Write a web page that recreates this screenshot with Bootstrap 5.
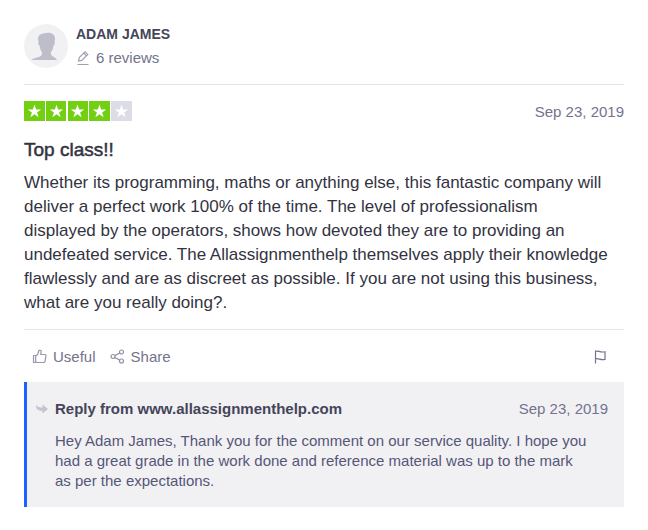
<!DOCTYPE html>
<html lang="en">
<head>
<meta charset="utf-8">
<meta name="viewport" content="width=device-width, initial-scale=1">
<title>Review by Adam James</title>
<link href="https://cdn.jsdelivr.net/npm/bootstrap@5.3.0/dist/css/bootstrap.min.css" rel="stylesheet">
<style>
  body { font-family: "Liberation Sans", Arial, sans-serif; font-size: 15px; line-height: 22px; color: #33333f; background: #fff; }
  svg { flex: none; }
  .soft, .soft:hover { color: #73738c; }
  .reviewer { line-height: 20px; }
  .reviewer-name { font-size: 14px; font-weight: 700; color: #45455a; }
  .rule-top { border-top: 1px solid #e5e5e9; }
  .review-title { font-size: 19px; line-height: 24px; font-weight: 500; -webkit-text-stroke: .5px; margin: 15px 0 9px; }
  .review-text { font-size: 17px; line-height: 24px; margin-bottom: 14px; }
  .actions { gap: 14px; padding: 15px 8px 13px; }
  .action { font-size: 15px; line-height: 24px; }
  .reply { background: #f1f1f4; border-left: 3px solid #1b61ff; padding: 15px 16px 16px 8px; }
  .reply-head { margin-bottom: 10px; }
  .reply-from { font-size: 15px; line-height: 24px; font-weight: 700; color: #45455a; }
  .reply-text { font-size: 15px; line-height: 20px; color: #565678; margin-left: 20px; }
</style>
</head>
<body>
<article class="container-fluid px-4 pt-4 pb-3">
  <header class="d-flex align-items-start gap-2 pb-3">
    <svg width="44" height="44" viewBox="0 0 44 44" role="img" aria-label="Avatar"><circle cx="22" cy="22" r="22" fill="#f1f1f4"/><path fill="#bebeca" d="M7.500 36c1.500-2 7-2.600 9-3.800 1.400-.8 1.700-2 1.500-4.200-1.400-1.600-2-3.600-2.300-6-1.400-.8-1.700-3-1.200-4.400-1.300-5 .8-7.600 5-8.100 4-1.300 8-.8 9.800.9 2 1.600 2 4.400 1.300 7.200.5 1.600 0 3.800-1.200 4.400-.3 2.600-1 4.400-2.500 6-.2 2.200.2 3.400 1.600 4.200 2 1.200 3.500 1.800 4.500 3.800z"/></svg>
    <div class="reviewer">
      <div class="reviewer-name">ADAM JAMES</div>
      <div class="d-flex align-items-center soft pt-1">
        <svg class="me-1" width="16" height="16" viewBox="0 0 16 16" fill="none" stroke="#a0a0b4" stroke-width="1.200"><path d="M1.500 14.500h11M2.500 11l.8-3.400L9 1.800l2.800 2.600-6 6zM7.800 3.200l2.600 2.500"/></svg>6 reviews
      </div>
    </div>
  </header>

  <section class="rule-top pt-3">
    <div class="d-flex justify-content-between align-items-start">
      <svg width="108" height="20" viewBox="0 0 108 20" role="img" aria-label="4 out of 5 stars">
        <defs><path id="star" fill="#fff" d="M10.500 3.500l1.600 4.900h5.100l-4.100 3 1.600 4.900-4.200-3-4.200 3 1.600-4.900-4.100-3h5.100z"/></defs>
        <path fill="#73cf11" d="M0 0h21v20H0zM22 0h20v20H22zM44 0h20v20H44zM65 0h21v20H65z"/><path fill="#dcdce6" d="M87 0h21v20H87z"/>
        <use href="#star"/><use href="#star" x="22"/><use href="#star" x="43"/><use href="#star" x="65"/><use href="#star" x="87"/>
      </svg>
      <time class="soft" datetime="2019-09-23">Sep 23, 2019</time>
    </div>
    <h1 class="review-title">Top class!!</h1>
    <p class="review-text">Whether its programming, maths or anything else, this fantastic company will<br> deliver a perfect work 100% of the time. The level of professionalism<br> displayed by the operators, shows how devoted they are to providing an<br> undefeated service. The Allassignmenthelp themselves apply their knowledge<br> flawlessly and are as discreet as possible. If you are not using this business,<br> what are you really doing?.</p>
  </section>

  <div class="rule-top d-flex align-items-center actions">
    <button type="button" class="btn btn-link action soft text-decoration-none d-flex align-items-center border-0 p-0">
      <svg class="me-1" width="17" height="16" viewBox="0 0 17 16" fill="none" stroke="#9898ae" stroke-width="1.200" stroke-linejoin="round"><path d="M1.500 6.500h2.200v7H1.500zM3.700 7l2-1.500L7 1.300h1.500l.8.900-.6 3.300h4.600l.7.900-1 6.300-.8.800H5.500l-1.800-.7"/></svg>Useful
    </button>
    <button type="button" class="btn btn-link action soft text-decoration-none d-flex align-items-center border-0 p-0">
      <svg class="me-1" width="17" height="16" viewBox="0 0 17 16" fill="none" stroke="#9090a8" stroke-width="1.200"><circle cx="3" cy="7.500" r="2"/><circle cx="11.500" cy="3" r="2"/><circle cx="11.500" cy="12" r="2"/><path d="M4.800 6.600l5-2.600M4.800 8.500l5 2.600"/></svg>Share
    </button>
    <button type="button" class="btn btn-link d-flex border-0 p-0 ms-auto me-2" aria-label="Report review">
      <svg width="16" height="16" viewBox="0 0 16 16" fill="none" stroke="#73738c" stroke-width="1.200"><path d="M3.500 14.500V2.200c3-.8 4 1.500 9.500.6v7.600c-5 1-6-1.400-9.500-.6"/></svg>
    </button>
  </div>

  <section class="reply">
    <div class="d-flex align-items-center reply-head">
      <svg class="me-1" width="16" height="16" viewBox="0 0 16 16"><path fill="#c4c4d0" d="M1 4c1 1.800 3 2.600 6.500 2.400V3.500L13 8l-5.500 4.500V9.700C3.500 10 .5 8 1 4z"/></svg>
      <span class="reply-from">Reply from www.allassignmenthelp.com</span>
      <time class="soft ms-auto" datetime="2019-09-23">Sep 23, 2019</time>
    </div>
    <p class="reply-text mb-0">Hey Adam James, Thank you for the comment on our service quality. I hope you<br> had a great grade in the work done and reference material was up to the mark<br> as per the expectations.</p>
  </section>
</article>
<script src="https://cdn.jsdelivr.net/npm/bootstrap@5.3.0/dist/js/bootstrap.bundle.min.js"></script>
</body>
</html>
